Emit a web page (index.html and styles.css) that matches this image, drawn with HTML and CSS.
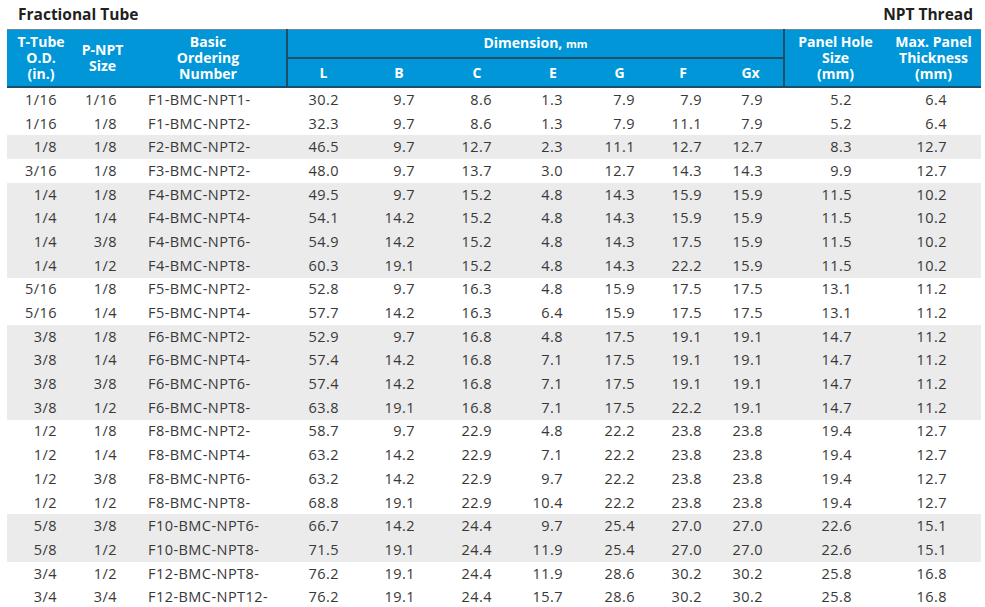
FILE: index.html
```html
<!DOCTYPE html>
<html>
<head>
<meta charset="utf-8">
<link rel="stylesheet" href="styles.css">
</head>
<body>
<div class="page">
  <div class="titlebar">
    <span class="title">Fractional Tube</span>
    <span class="title">NPT Thread</span>
  </div>
  <table class="spec">
    <colgroup>
      <col class="w-tube"><col class="w-npt"><col class="w-order">
      <col class="w-l"><col class="w-b"><col class="w-c"><col class="w-e"><col class="w-g"><col class="w-f"><col class="w-gx">
      <col class="w-hole"><col class="w-max">
    </colgroup>
    <thead>
      <tr class="h1">
        <th rowspan="2">T-Tube<br>O.D.<br>(in.)</th>
        <th rowspan="2">P-NPT<br>Size</th>
        <th rowspan="2">Basic<br>Ordering<br>Number</th>
        <th colspan="7" class="dim">Dimension, <span class="mm">mm</span></th>
        <th rowspan="2" class="sep-l">Panel Hole<br>Size<br>(mm)</th>
        <th rowspan="2">Max. Panel<br>Thickness<br>(mm)</th>
      </tr>
      <tr class="h2">
        <th class="sep-l">L</th><th>B</th><th>C</th><th>E</th><th>G</th><th>F</th><th>Gx</th>
      </tr>
    </thead>
    <tbody>
      <tr><td>1/16</td><td>1/16</td><td>F1-BMC-NPT1-</td><td>30.2</td><td>9.7</td><td>8.6</td><td>1.3</td><td>7.9</td><td>7.9</td><td>7.9</td><td>5.2</td><td>6.4</td></tr>
      <tr><td>1/16</td><td>1/8</td><td>F1-BMC-NPT2-</td><td>32.3</td><td>9.7</td><td>8.6</td><td>1.3</td><td>7.9</td><td>11.1</td><td>7.9</td><td>5.2</td><td>6.4</td></tr>
      <tr class="shade"><td>1/8</td><td>1/8</td><td>F2-BMC-NPT2-</td><td>46.5</td><td>9.7</td><td>12.7</td><td>2.3</td><td>11.1</td><td>12.7</td><td>12.7</td><td>8.3</td><td>12.7</td></tr>
      <tr><td>3/16</td><td>1/8</td><td>F3-BMC-NPT2-</td><td>48.0</td><td>9.7</td><td>13.7</td><td>3.0</td><td>12.7</td><td>14.3</td><td>14.3</td><td>9.9</td><td>12.7</td></tr>
      <tr class="shade"><td>1/4</td><td>1/8</td><td>F4-BMC-NPT2-</td><td>49.5</td><td>9.7</td><td>15.2</td><td>4.8</td><td>14.3</td><td>15.9</td><td>15.9</td><td>11.5</td><td>10.2</td></tr>
      <tr class="shade"><td>1/4</td><td>1/4</td><td>F4-BMC-NPT4-</td><td>54.1</td><td>14.2</td><td>15.2</td><td>4.8</td><td>14.3</td><td>15.9</td><td>15.9</td><td>11.5</td><td>10.2</td></tr>
      <tr class="shade"><td>1/4</td><td>3/8</td><td>F4-BMC-NPT6-</td><td>54.9</td><td>14.2</td><td>15.2</td><td>4.8</td><td>14.3</td><td>17.5</td><td>15.9</td><td>11.5</td><td>10.2</td></tr>
      <tr class="shade"><td>1/4</td><td>1/2</td><td>F4-BMC-NPT8-</td><td>60.3</td><td>19.1</td><td>15.2</td><td>4.8</td><td>14.3</td><td>22.2</td><td>15.9</td><td>11.5</td><td>10.2</td></tr>
      <tr><td>5/16</td><td>1/8</td><td>F5-BMC-NPT2-</td><td>52.8</td><td>9.7</td><td>16.3</td><td>4.8</td><td>15.9</td><td>17.5</td><td>17.5</td><td>13.1</td><td>11.2</td></tr>
      <tr><td>5/16</td><td>1/4</td><td>F5-BMC-NPT4-</td><td>57.7</td><td>14.2</td><td>16.3</td><td>6.4</td><td>15.9</td><td>17.5</td><td>17.5</td><td>13.1</td><td>11.2</td></tr>
      <tr class="shade"><td>3/8</td><td>1/8</td><td>F6-BMC-NPT2-</td><td>52.9</td><td>9.7</td><td>16.8</td><td>4.8</td><td>17.5</td><td>19.1</td><td>19.1</td><td>14.7</td><td>11.2</td></tr>
      <tr class="shade"><td>3/8</td><td>1/4</td><td>F6-BMC-NPT4-</td><td>57.4</td><td>14.2</td><td>16.8</td><td>7.1</td><td>17.5</td><td>19.1</td><td>19.1</td><td>14.7</td><td>11.2</td></tr>
      <tr class="shade"><td>3/8</td><td>3/8</td><td>F6-BMC-NPT6-</td><td>57.4</td><td>14.2</td><td>16.8</td><td>7.1</td><td>17.5</td><td>19.1</td><td>19.1</td><td>14.7</td><td>11.2</td></tr>
      <tr class="shade"><td>3/8</td><td>1/2</td><td>F6-BMC-NPT8-</td><td>63.8</td><td>19.1</td><td>16.8</td><td>7.1</td><td>17.5</td><td>22.2</td><td>19.1</td><td>14.7</td><td>11.2</td></tr>
      <tr><td>1/2</td><td>1/8</td><td>F8-BMC-NPT2-</td><td>58.7</td><td>9.7</td><td>22.9</td><td>4.8</td><td>22.2</td><td>23.8</td><td>23.8</td><td>19.4</td><td>12.7</td></tr>
      <tr><td>1/2</td><td>1/4</td><td>F8-BMC-NPT4-</td><td>63.2</td><td>14.2</td><td>22.9</td><td>7.1</td><td>22.2</td><td>23.8</td><td>23.8</td><td>19.4</td><td>12.7</td></tr>
      <tr><td>1/2</td><td>3/8</td><td>F8-BMC-NPT6-</td><td>63.2</td><td>14.2</td><td>22.9</td><td>9.7</td><td>22.2</td><td>23.8</td><td>23.8</td><td>19.4</td><td>12.7</td></tr>
      <tr><td>1/2</td><td>1/2</td><td>F8-BMC-NPT8-</td><td>68.8</td><td>19.1</td><td>22.9</td><td>10.4</td><td>22.2</td><td>23.8</td><td>23.8</td><td>19.4</td><td>12.7</td></tr>
      <tr class="shade"><td>5/8</td><td>3/8</td><td>F10-BMC-NPT6-</td><td>66.7</td><td>14.2</td><td>24.4</td><td>9.7</td><td>25.4</td><td>27.0</td><td>27.0</td><td>22.6</td><td>15.1</td></tr>
      <tr class="shade"><td>5/8</td><td>1/2</td><td>F10-BMC-NPT8-</td><td>71.5</td><td>19.1</td><td>24.4</td><td>11.9</td><td>25.4</td><td>27.0</td><td>27.0</td><td>22.6</td><td>15.1</td></tr>
      <tr><td>3/4</td><td>1/2</td><td>F12-BMC-NPT8-</td><td>76.2</td><td>19.1</td><td>24.4</td><td>11.9</td><td>28.6</td><td>30.2</td><td>30.2</td><td>25.8</td><td>16.8</td></tr>
      <tr><td>3/4</td><td>3/4</td><td>F12-BMC-NPT12-</td><td>76.2</td><td>19.1</td><td>24.4</td><td>15.7</td><td>28.6</td><td>30.2</td><td>30.2</td><td>25.8</td><td>16.8</td></tr>
    </tbody>
  </table>
</div>
</body>
</html>
```

FILE: styles.css
```css
html, body {
  margin: 0;
  padding: 0;
  background: #ffffff;
}

.page {
  width: 985px;
  height: 607px;
  overflow: hidden;
  padding-left: 7px;
  box-sizing: border-box;
  font-family: "Open Sans", "Noto Sans", sans-serif;
}

.titlebar {
  display: flex;
  justify-content: space-between;
  height: 29px;
  padding: 3px 12px 0 11px;
  box-sizing: border-box;
}

.title {
  font-weight: 700;
  font-size: 15.5px;
  line-height: 22px;
  color: #231f20;
}

.spec {
  width: 974px;
  table-layout: fixed;
  border-collapse: collapse;
  border-spacing: 0;
}

.w-tube { width: 68px; }
.w-npt { width: 55px; }
.w-order { width: 157px; }
.w-l { width: 72px; }
.w-b { width: 80px; }
.w-c { width: 76px; }
.w-e { width: 76px; }
.w-g { width: 57px; }
.w-f { width: 70px; }
.w-gx { width: 66px; }
.w-hole { width: 102px; }
.w-max { width: 95px; }

.spec thead {
  background: #0096d8;
  border-top: 1px solid #6f8896;
  border-bottom: 2px solid #1d4e69;
}

.spec th {
  color: #ffffff;
  font-weight: 700;
  font-size: 14px;
  line-height: 16px;
  padding: 0;
  text-align: center;
  vertical-align: middle;
}

.spec .h1 th { height: 27px; }
.spec .h2 th { height: 27px; }

.spec th.dim {
  border-left: 2px solid #1d4e69;
  border-right: 2px solid #1d4e69;
  border-bottom: 2px solid #1d4e69;
}

.spec th.sep-l {
  border-left: 2px solid #1d4e69;
}

.mm {
  font-size: 11px;
}

.spec td {
  height: 23.7px;
  padding: 0;
  font-size: 14.5px;
  letter-spacing: 0.45px;
  line-height: 16px;
  color: #383838;
  text-align: right;
  vertical-align: middle;
  white-space: nowrap;
}

.spec tr.shade td {
  background: #ebebeb;
}

.spec td:nth-child(1) { padding-right: 18px; }
.spec td:nth-child(2) { padding-right: 13px; }
.spec td:nth-child(3) { text-align: left; padding-left: 18px; }
.spec td:nth-child(4) { padding-right: 20px; }
.spec td:nth-child(5) { padding-right: 24px; }
.spec td:nth-child(6) { padding-right: 23px; }
.spec td:nth-child(7) { padding-right: 28px; }
.spec td:nth-child(8) { padding-right: 13px; }
.spec td:nth-child(9) { padding-right: 16px; }
.spec td:nth-child(10) { padding-right: 21px; }
.spec td:nth-child(11) { padding-right: 34px; }
.spec td:nth-child(12) { padding-right: 34px; }
```
